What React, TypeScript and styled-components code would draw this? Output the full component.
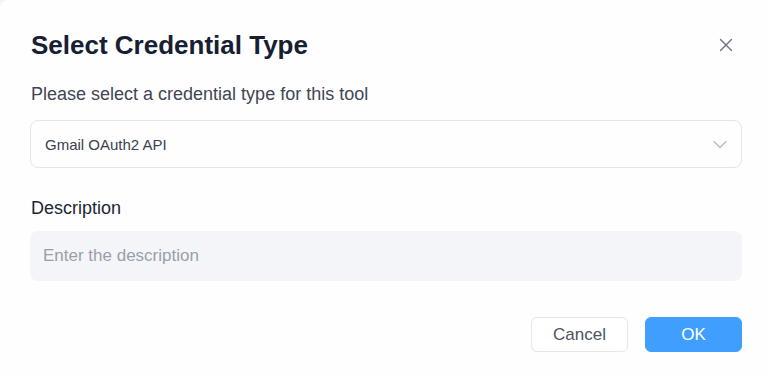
import styled, { createGlobalStyle } from 'styled-components';

const GlobalStyle = createGlobalStyle`
  html, body {
    margin: 0;
    padding: 0;
    background: #f3f4f6;
  }
  body {
    font-family: "Liberation Sans", Arial, sans-serif;
  }
  * {
    box-sizing: border-box;
  }
`;

const Dialog = styled.div`
  width: 768px;
  height: 376px;
  background: #fefefe;
  border-radius: 8px 0 0 0;
  padding: 30px 26px 0 30px;
  display: flex;
  flex-direction: column;
`;

const Header = styled.div`
  display: flex;
  align-items: center;
  justify-content: space-between;
  height: 30px;
`;

const Title = styled.h2`
  margin: 0;
  font-size: 26px;
  line-height: 30px;
  font-weight: 700;
  color: #172033;
  padding-left: 1px;
`;

const CloseButton = styled.button`
  border: none;
  background: none;
  padding: 0;
  width: 24px;
  height: 24px;
  display: flex;
  align-items: center;
  justify-content: center;
  color: #6b7280;
  cursor: pointer;
  margin-right: 4px;
`;

const Subtitle = styled.p`
  margin: 23px 0 0 1px;
  font-size: 18px;
  line-height: 22px;
  color: #3f4654;
`;

const SelectBox = styled.div`
  margin-top: 15px;
  width: 712px;
  height: 48px;
  border: 1px solid #e3e5e9;
  border-radius: 8px;
  display: flex;
  align-items: center;
  justify-content: space-between;
  padding: 0 14px 0 14px;
  font-size: 15px;
  color: #3a4150;
`;

const Label = styled.div`
  margin-top: 29px;
  margin-left: 1px;
  font-size: 18px;
  line-height: 22px;
  color: #1f2633;
`;

const Input = styled.input`
  margin-top: 12px;
  width: 712px;
  height: 50px;
  border: none;
  outline: none;
  border-radius: 8px;
  background: #f4f5f9;
  padding: 0 13px;
  font-family: "Liberation Sans", Arial, sans-serif;
  font-size: 17px;
  color: #1f2633;

  &::placeholder {
    color: #9a9fa8;
  }
`;

const Footer = styled.div`
  margin-top: 36px;
  width: 712px;
  display: flex;
  justify-content: flex-end;
  gap: 17px;
`;

const Button = styled.button<{ $primary?: boolean }>`
  width: 97px;
  height: 35px;
  border-radius: 6px;
  font-family: "Liberation Sans", Arial, sans-serif;
  font-size: 17px;
  cursor: pointer;
  border: 1px solid ${(p) => (p.$primary ? '#409efe' : '#e5e7eb')};
  background: ${(p) => (p.$primary ? '#409efe' : '#ffffff')};
  color: ${(p) => (p.$primary ? '#ffffff' : '#4b5261')};
`;

const App = () => {
  return (
    <>
      <GlobalStyle />
      <Dialog>
        <Header>
          <Title>Select Credential Type</Title>
          <CloseButton aria-label="Close">
            <svg width="14" height="14" viewBox="0 0 14 14" fill="none">
              <path d="M1.5 1.5L12.5 12.5M12.5 1.5L1.5 12.5" stroke="currentColor" strokeWidth="1.4" strokeLinecap="round" />
            </svg>
          </CloseButton>
        </Header>
        <Subtitle>Please select a credential type for this tool</Subtitle>
        <SelectBox>
          <span>Gmail OAuth2 API</span>
          <svg width="14" height="9" viewBox="0 0 14 9" fill="none">
            <path d="M1 1.5L7 7.5L13 1.5" stroke="#b4b8c0" strokeWidth="1.2" strokeLinecap="round" strokeLinejoin="round" />
          </svg>
        </SelectBox>
        <Label>Description</Label>
        <Input placeholder="Enter the description" />
        <Footer>
          <Button>Cancel</Button>
          <Button $primary>OK</Button>
        </Footer>
      </Dialog>
    </>
  );
};

export default App;
